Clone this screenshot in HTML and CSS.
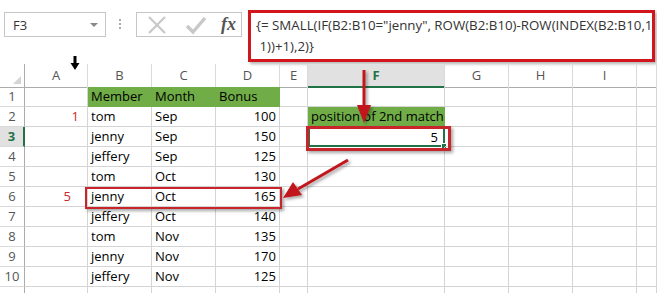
FILE: index.html
```html
<!DOCTYPE html>
<html lang="en">
<head>
    <meta charset="UTF-8">
    <title>SMALL IF - position of 2nd match</title>
    <link rel="stylesheet" href="styles.css">
</head>
<body>
<div class="page">

    <div class="toolbar">
        <div class="namebox">
            <span>F3</span>
            <span class="drop"></span>
        </div>
        <div class="dots"><i></i><i></i><i></i></div>
        <div class="buttons">
            <svg width="22" height="22" viewBox="0 0 22 22"><path d="M3 3 L19 19 M19 3 L3 19" stroke="#c8c8c8" stroke-width="2.2" fill="none"/></svg>
            <svg width="24" height="22" viewBox="0 0 24 22"><path d="M3 12 L9 18 L21 4" stroke="#c8c8c8" stroke-width="3.4" fill="none"/></svg>
            <span class="fx">fx</span>
        </div>
        <div class="formula">{= SMALL(IF(B2:B10="jenny", ROW(B2:B10)-ROW(INDEX(B2:B10,1,<br>&nbsp;1))+1),2)}</div>
    </div>

    <div class="sheet">
        <div class="row head">
            <div class="corner"><span class="tri"></span></div>
            <div class="h">A</div><div class="h">B</div><div class="h">C</div><div class="h">D</div><div class="h">E</div>
            <div class="h sel">F</div><div class="h">G</div><div class="h">H</div><div class="h">I</div><div class="h"></div>
        </div>
        <div class="row">
            <div class="n">1</div><div class="c"></div>
            <div class="c g">Member</div><div class="c g">Month</div><div class="c g">Bonus</div>
            <div class="c"></div><div class="c"></div><div class="c"></div><div class="c"></div><div class="c"></div><div class="c"></div>
        </div>
        <div class="row">
            <div class="n">2</div><div class="c num mark">1</div>
            <div class="c">tom</div><div class="c">Sep</div><div class="c num">100</div>
            <div class="c"></div><div class="c g">position of 2nd match</div><div class="c"></div><div class="c"></div><div class="c"></div><div class="c"></div>
        </div>
        <div class="row">
            <div class="n sel">3</div><div class="c"></div>
            <div class="c">jenny</div><div class="c">Sep</div><div class="c num">150</div>
            <div class="c"></div><div class="c num active">5<span class="handle"></span></div><div class="c"></div><div class="c"></div><div class="c"></div><div class="c"></div>
        </div>
        <div class="row">
            <div class="n">4</div><div class="c"></div>
            <div class="c">jeffery</div><div class="c">Sep</div><div class="c num">125</div>
            <div class="c"></div><div class="c"></div><div class="c"></div><div class="c"></div><div class="c"></div><div class="c"></div>
        </div>
        <div class="row">
            <div class="n">5</div><div class="c"></div>
            <div class="c">tom</div><div class="c">Oct</div><div class="c num">130</div>
            <div class="c"></div><div class="c"></div><div class="c"></div><div class="c"></div><div class="c"></div><div class="c"></div>
        </div>
        <div class="row">
            <div class="n">6</div><div class="c num mark far">5</div>
            <div class="c">jenny</div><div class="c">Oct</div><div class="c num">165</div>
            <div class="c"></div><div class="c"></div><div class="c"></div><div class="c"></div><div class="c"></div><div class="c"></div>
        </div>
        <div class="row">
            <div class="n">7</div><div class="c"></div>
            <div class="c">jeffery</div><div class="c">Oct</div><div class="c num">140</div>
            <div class="c"></div><div class="c"></div><div class="c"></div><div class="c"></div><div class="c"></div><div class="c"></div>
        </div>
        <div class="row">
            <div class="n">8</div><div class="c"></div>
            <div class="c">tom</div><div class="c">Nov</div><div class="c num">135</div>
            <div class="c"></div><div class="c"></div><div class="c"></div><div class="c"></div><div class="c"></div><div class="c"></div>
        </div>
        <div class="row">
            <div class="n">9</div><div class="c"></div>
            <div class="c">jenny</div><div class="c">Nov</div><div class="c num">170</div>
            <div class="c"></div><div class="c"></div><div class="c"></div><div class="c"></div><div class="c"></div><div class="c"></div>
        </div>
        <div class="row">
            <div class="n">10</div><div class="c"></div>
            <div class="c">jeffery</div><div class="c">Nov</div><div class="c num">125</div>
            <div class="c"></div><div class="c"></div><div class="c"></div><div class="c"></div><div class="c"></div><div class="c"></div>
        </div>
        <div class="row">
            <div class="n"></div><div class="c"></div><div class="c"></div><div class="c"></div><div class="c"></div>
            <div class="c"></div><div class="c"></div><div class="c"></div><div class="c"></div><div class="c"></div><div class="c"></div>
        </div>

        <!-- red call-out boxes -->
        <div class="callout box-f3"></div>
        <div class="callout box-row6"></div>
    </div>

    <!-- arrows drawn over the sheet -->
    <svg class="arrows" width="657" height="293" viewBox="0 0 657 293">
        <defs>
            <filter id="sh" x="-20%" y="-20%" width="160%" height="160%">
                <feDropShadow dx="2" dy="2" stdDeviation="1.5" flood-color="#000" flood-opacity="0.35"/>
            </filter>
        </defs>
        <path d="M75 56 V64" stroke="#000" stroke-width="3"/>
        <path d="M70.5 63 L79.5 63 L75 70 Z" fill="#000"/>
        <g filter="url(#sh)" fill="#c0161d" stroke="#c0161d">
            <path d="M364 70 V108" stroke-width="3" fill="none"/>
            <path d="M357 105 L371 105 L364 123 Z" stroke="none"/>
            <path d="M348 160 L298 189" stroke-width="3" fill="none"/>
            <path d="M293 182 L302 195 L283 198 Z" stroke="none"/>
        </g>
    </svg>

</div>
</body>
</html>
```

FILE: styles.css
```css
* {
    margin: 0;
    padding: 0;
    box-sizing: border-box;
}

body {
    font-family: 'Open Sans', sans-serif;
    background: #fff;
    color: #000;
}

.page {
    position: relative;
    width: 657px;
    height: 293px;
    overflow: hidden;
}

/* formula bar */

.toolbar {
    display: flex;
    align-items: flex-start;
    height: 64px;
    padding-top: 10px;
}

.namebox {
    display: flex;
    align-items: center;
    justify-content: space-between;
    width: 102px;
    height: 25px;
    margin: 2px 0 0 4px;
    padding: 0 7px 0 8px;
    border: 1px solid #c6c6c6;
    font-size: 13px;
    color: #333;
}

.drop {
    width: 0;
    height: 0;
    border-left: 4px solid transparent;
    border-right: 4px solid transparent;
    border-top: 4px solid #888;
}

.dots {
    display: flex;
    flex-direction: column;
    gap: 2px;
    width: 30px;
    padding: 9px 0 0 13px;
}

.dots i {
    display: block;
    width: 2px;
    height: 2px;
    background: #aaa;
}

.buttons {
    display: flex;
    align-items: center;
    gap: 16px;
    width: 106px;
    height: 25px;
    margin-top: 2px;
    padding-left: 9px;
    border: 1px solid #c6c6c6;
}

.fx {
    font-family: 'Liberation Serif', serif;
    font-style: italic;
    font-weight: bold;
    font-size: 18px;
    color: #555;
    margin-left: -3px;
}

.formula {
    width: 407px;
    height: 52px;
    margin-left: 6px;
    padding: 2px 0 0 5px;
    border: 3px solid #d2161e;
    box-shadow: 2px 2px 3px rgba(0, 0, 0, 0.3);
    font-size: 13.3px;
    line-height: 21px;
    color: #333;
    white-space: nowrap;
    overflow: hidden;
}

/* sheet grid */

.sheet {
    position: relative;
}

.row {
    display: grid;
    grid-template-columns: 25px 63px 64px 64px 64px 28px 137px 64px 64px 64px 20px;
    height: 20px;
}

.row.head {
    height: 23px;
}

.h, .corner {
    border-right: 1px solid #dadada;
    border-bottom: 1px solid #ababab;
    font-size: 13px;
    color: #555;
    text-align: center;
    line-height: 22px;
}

.h.sel {
    background: #e1e1e1;
    border-bottom: 2px solid #217346;
    color: #217346;
    font-weight: bold;
}

.corner {
    position: relative;
    border-right-color: #ababab;
}

.tri {
    position: absolute;
    right: 3px;
    bottom: 3px;
    width: 0;
    height: 0;
    border-left: 8px solid transparent;
    border-bottom: 8px solid #d4d4d4;
}

.n {
    border-right: 1px solid #ababab;
    border-bottom: 1px solid #dadada;
    font-size: 13px;
    color: #555;
    text-align: center;
    line-height: 19px;
}

.n.sel {
    background: #e1e1e1;
    border-right: 2px solid #217346;
    color: #217346;
    font-weight: bold;
}

.c {
    position: relative;
    border-right: 1px solid #d4d4d4;
    border-bottom: 1px solid #d4d4d4;
    padding: 0 3px;
    font-size: 13px;
    line-height: 19px;
    white-space: nowrap;
}

.c.g {
    background: #70ad47;
    border-color: #70ad47;
}

.c.num {
    text-align: right;
}

.c.mark {
    color: #d0262b;
    padding-right: 8px;
}

.c.mark.far {
    padding-right: 16px;
}

.c.active {
    border: 2px solid #217346;
    line-height: 16px;
    padding-right: 5px;
}

.handle {
    position: absolute;
    right: -4px;
    bottom: -4px;
    width: 6px;
    height: 6px;
    background: #217346;
    border: 1px solid #fff;
}

/* red call-outs */

.callout {
    position: absolute;
    border: 2px solid #c8242b;
    box-shadow: 2px 2px 3px rgba(0, 0, 0, 0.35);
}

.box-f3 {
    top: 62px;
    left: 306px;
    width: 145px;
    height: 25px;
    border-width: 3px;
}

.box-row6 {
    top: 123px;
    left: 85px;
    width: 197px;
    height: 22px;
}

.arrows {
    position: absolute;
    top: 0;
    left: 0;
}
```
